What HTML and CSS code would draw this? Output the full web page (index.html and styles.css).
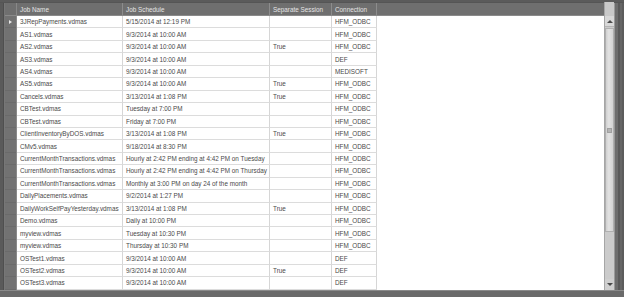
FILE: index.html
```html
<!DOCTYPE html>
<html>
<head>
<meta charset="utf-8">
<link rel="stylesheet" href="styles.css">
</head>
<body>
<div class="window">
  <div class="topbar"></div>
  <div class="main">
    <div class="leftedge"></div>
    <div class="gridwrap">
      <div class="header">
        <div class="rh-head"></div>
        <div class="hc c1">Job Name</div>
        <div class="hc c2">Job Schedule</div>
        <div class="hc c3">Separate Session</div>
        <div class="hc c4">Connection</div>
        <div class="hc fill"></div>
      </div>
      <div class="body">
        <div class="rowheads">
          <div class="rh current"><span class="tri"></span></div>
          <div class="rh"></div><div class="rh"></div><div class="rh"></div><div class="rh"></div><div class="rh"></div>
          <div class="rh"></div><div class="rh"></div><div class="rh"></div><div class="rh"></div><div class="rh"></div>
          <div class="rh"></div><div class="rh"></div><div class="rh"></div><div class="rh"></div><div class="rh"></div>
          <div class="rh"></div><div class="rh"></div><div class="rh"></div><div class="rh"></div><div class="rh"></div>
          <div class="rh"></div>
        </div>
        <div class="rows">
          <div class="row"><div class="c c1">3JRepPayments.vdmas</div><div class="c c2">5/15/2014 at 12:19 PM</div><div class="c c3"></div><div class="c c4">HFM_ODBC</div></div>
          <div class="row"><div class="c c1">AS1.vdmas</div><div class="c c2">9/3/2014 at 10:00 AM</div><div class="c c3"></div><div class="c c4">HFM_ODBC</div></div>
          <div class="row"><div class="c c1">AS2.vdmas</div><div class="c c2">9/3/2014 at 10:00 AM</div><div class="c c3">True</div><div class="c c4">HFM_ODBC</div></div>
          <div class="row"><div class="c c1">AS3.vdmas</div><div class="c c2">9/3/2014 at 10:00 AM</div><div class="c c3"></div><div class="c c4">DEF</div></div>
          <div class="row"><div class="c c1">AS4.vdmas</div><div class="c c2">9/3/2014 at 10:00 AM</div><div class="c c3"></div><div class="c c4">MEDISOFT</div></div>
          <div class="row"><div class="c c1">AS5.vdmas</div><div class="c c2">9/3/2014 at 10:00 AM</div><div class="c c3">True</div><div class="c c4">HFM_ODBC</div></div>
          <div class="row"><div class="c c1">Cancels.vdmas</div><div class="c c2">3/13/2014 at 1:08 PM</div><div class="c c3">True</div><div class="c c4">HFM_ODBC</div></div>
          <div class="row"><div class="c c1">CBTest.vdmas</div><div class="c c2">Tuesday at 7:00 PM</div><div class="c c3"></div><div class="c c4">HFM_ODBC</div></div>
          <div class="row"><div class="c c1">CBTest.vdmas</div><div class="c c2">Friday at 7:00 PM</div><div class="c c3"></div><div class="c c4">HFM_ODBC</div></div>
          <div class="row"><div class="c c1">ClientInventoryByDOS.vdmas</div><div class="c c2">3/13/2014 at 1:08 PM</div><div class="c c3">True</div><div class="c c4">HFM_ODBC</div></div>
          <div class="row"><div class="c c1">CMv5.vdmas</div><div class="c c2">9/18/2014 at 8:30 PM</div><div class="c c3"></div><div class="c c4">HFM_ODBC</div></div>
          <div class="row"><div class="c c1">CurrentMonthTransactions.vdmas</div><div class="c c2">Hourly at 2:42 PM ending at 4:42 PM on Tuesday</div><div class="c c3"></div><div class="c c4">HFM_ODBC</div></div>
          <div class="row"><div class="c c1">CurrentMonthTransactions.vdmas</div><div class="c c2">Hourly at 2:42 PM ending at 4:42 PM on Thursday</div><div class="c c3"></div><div class="c c4">HFM_ODBC</div></div>
          <div class="row"><div class="c c1">CurrentMonthTransactions.vdmas</div><div class="c c2">Monthly at 3:00 PM on day 24 of the month</div><div class="c c3"></div><div class="c c4">HFM_ODBC</div></div>
          <div class="row"><div class="c c1">DailyPlacements.vdmas</div><div class="c c2">9/2/2014 at 1:27 PM</div><div class="c c3"></div><div class="c c4">HFM_ODBC</div></div>
          <div class="row"><div class="c c1">DailyWorkSelfPayYesterday.vdmas</div><div class="c c2">3/13/2014 at 1:08 PM</div><div class="c c3">True</div><div class="c c4">HFM_ODBC</div></div>
          <div class="row"><div class="c c1">Demo.vdmas</div><div class="c c2">Daily at 10:00 PM</div><div class="c c3"></div><div class="c c4">HFM_ODBC</div></div>
          <div class="row"><div class="c c1">myview.vdmas</div><div class="c c2">Tuesday at 10:30 PM</div><div class="c c3"></div><div class="c c4">HFM_ODBC</div></div>
          <div class="row"><div class="c c1">myview.vdmas</div><div class="c c2">Thursday at 10:30 PM</div><div class="c c3"></div><div class="c c4">HFM_ODBC</div></div>
          <div class="row"><div class="c c1">OSTest1.vdmas</div><div class="c c2">9/3/2014 at 10:00 AM</div><div class="c c3"></div><div class="c c4">DEF</div></div>
          <div class="row"><div class="c c1">OSTest2.vdmas</div><div class="c c2">9/3/2014 at 10:00 AM</div><div class="c c3">True</div><div class="c c4">DEF</div></div>
          <div class="row"><div class="c c1">OSTest3.vdmas</div><div class="c c2">9/3/2014 at 10:00 AM</div><div class="c c3"></div><div class="c c4">DEF</div></div>
        </div>
        <div class="scrollbar">
          <div class="sbtn up"><span class="arr-up"></span></div>
          <div class="track">
            <div class="thumb"><span class="grip"></span></div>
          </div>
          <div class="sbtn down"><span class="arr-down"></span></div>
        </div>
      </div>
    </div>
    <div class="rightedge"></div>
  </div>
  <div class="bottombar"></div>
</div>
</body>
</html>
```
FILE: styles.css
```css
* { box-sizing: border-box; }
html, body { margin: 0; padding: 0; }
body {
  width: 624px;
  height: 297px;
  overflow: hidden;
  background: #666666;
  font-family: "Liberation Sans", Arial, sans-serif;
  font-size: 6.35px;
}
.window {
  display: flex;
  flex-direction: column;
  height: 297px;
}
.topbar {
  height: 3px;
  background: #5b5b5b;
  border-bottom: 1px solid #555555;
}
.main {
  display: flex;
  height: 287px;
}
.leftedge {
  width: 5px;
  background: linear-gradient(to right, #5a5a5a 0, #5a5a5a 3px, #4f4f4f 3px, #4f4f4f 4px, #777 4px);
}
.gridwrap {
  width: 609px;
  display: flex;
  flex-direction: column;
}
.header {
  display: flex;
  height: 13px;
  background: #6f6f6f;
  border-bottom: 1px solid #8a8a8a;
  color: #e4e4e4;
}
.rh-head {
  width: 12px;
  border-right: 1px solid #888;
}
.hc {
  display: flex;
  align-items: center;
  padding-left: 3px;
  border-right: 1px solid #8c8c8c;
  white-space: nowrap;
  overflow: hidden;
}
.c1 { width: 106px; }
.c2 { width: 147px; }
.c3 { width: 62px; }
.c4 { width: 45px; }
.hc.fill { flex: 1; border-right: none; }
.body {
  display: flex;
  flex: 1;
  background: #ffffff;
}
.rowheads {
  width: 12px;
  background: #727272;
  border-right: 1px solid #8a8a8a;
}
.rh {
  height: 12.45px;
  border-bottom: 1px solid #6a6a6a;
  display: flex;
  align-items: center;
  justify-content: center;
}
.tri {
  width: 0;
  height: 0;
  border-left: 3px solid #e8e8e8;
  border-top: 2px solid transparent;
  border-bottom: 2px solid transparent;
}
.rows {
  width: 587px;
  background: #ffffff;
}
.row {
  display: flex;
  height: 12.45px;
}
.c {
  border-right: 1px solid #d6d6d6;
  border-bottom: 1px solid #dcdcdc;
  padding-left: 3px;
  color: #4a4a4a;
  display: flex;
  align-items: center;
  white-space: nowrap;
  overflow: hidden;
}
.scrollbar {
  width: 10px;
  margin-top: -14px;
  display: flex;
  flex-direction: column;
  background: #c9c9c9;
  border-left: 1px solid #a6a6a6;
}
.sbtn {
  height: 11px;
  display: flex;
  align-items: center;
  justify-content: center;
  background: #d8d8d8;
}
.sbtn.up { margin-top: 14px; border-bottom: 1px solid #b4b4b4; }
.arr-up {
  width: 0; height: 0;
  border-left: 3px solid transparent;
  border-right: 3px solid transparent;
  border-bottom: 3px solid #4a4a4a;
}
.arr-down {
  width: 0; height: 0;
  border-left: 3px solid transparent;
  border-right: 3px solid transparent;
  border-top: 3px solid #4a4a4a;
}
.sbtn.down { background: #cfcfcf; }
.track {
  flex: 1;
  background: #cbcbcb;
  padding-top: 1px;
}
.thumb {
  height: 204px;
  background: linear-gradient(to right, #d0d0d0, #e2e2e2 40%, #d4d4d4);
  border: 1px solid #b0b0b0;
  display: flex;
  align-items: center;
  justify-content: center;
}
.grip {
  width: 5px;
  height: 5px;
  background: #b4b4b4;
  border: 1px solid #a0a0a0;
}
.rightedge {
  width: 10px;
  background: linear-gradient(to right, #9a9a9a 0, #9a9a9a 1px, #6e6e6e 1px, #6e6e6e 4px, #5a5a5a 4px, #5a5a5a 6px, #666 6px, #666 8px, #5c5c5c 8px);
}
.bottombar {
  height: 7px;
  background: #6a6a6a;
  border-top: 1px solid #8a8a8a;
}
```
